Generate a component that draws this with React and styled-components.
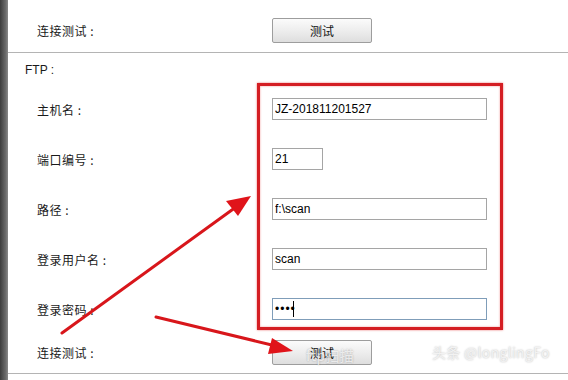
import React from 'react';
import styled, { createGlobalStyle } from 'styled-components';

const GlobalStyle = createGlobalStyle`
  html, body {
    margin: 0;
    padding: 0;
    background: #ffffff;
  }
  body {
    font-family: "Liberation Sans", "Noto Sans CJK SC", sans-serif;
    font-size: 12px;
    color: #111;
  }
`;

const Page = styled.div`
  position: relative;
  display: flex;
  width: 568px;
  height: 380px;
  overflow: hidden;
  background: #fff;
`;

const Edge = styled.div`
  width: 8px;
  flex: none;
  background: linear-gradient(to right, #3c3c3c, #6a6a6a 70%, #8a8a8a);
`;

const Content = styled.div`
  flex: 1;
  display: flex;
  flex-direction: column;
`;

const Row = styled.div`
  display: flex;
  align-items: center;
  height: ${p => p.$h}px;
  padding-left: 29px;
  flex: none;
`;

const Label = styled.div`
  width: 235px;
  flex: none;
  font-family: "Noto Sans CJK SC", sans-serif;
  font-size: 12px;
  letter-spacing: 0.5px;
  color: #1a1a1a;
`;

const Section = styled.div`
  padding: 9px 0 6px 17px;
  line-height: 16px;
  font-size: 12px;
  color: #1a1a1a;
`;

const Divider = styled.div`
  height: 1px;
  background: #b4b4b4;
  flex: none;
`;

const Button = styled.button`
  width: 100px;
  height: 25px;
  border: 1px solid #9d9d9d;
  border-radius: 2px;
  background: linear-gradient(#fbfbfb, #ececec 55%, #dedede);
  font-family: "Noto Sans CJK SC", sans-serif;
  font-size: 12px;
  color: #111;
  padding: 0;
`;

const Field = styled.div`
  position: relative;
  display: flex;
`;

const Input = styled.input`
  box-sizing: border-box;
  width: ${p => p.$w}px;
  height: 22px;
  border: 1px solid ${p => (p.$focus ? '#7f9db9' : '#a5a5a5')};
  padding: 0 2px;
  font-family: "Liberation Sans", Arial, sans-serif;
  font-size: 12px;
  color: #000;
  background: #fff;
  outline: none;
  letter-spacing: ${p => (p.type === 'password' ? '1px' : '0')};
`;

const Caret = styled.span`
  position: absolute;
  left: 21px;
  top: 3px;
  width: 1px;
  height: 16px;
  background: #000;
`;

const Highlight = styled.div`
  position: absolute;
  left: 257px;
  top: 83px;
  width: 240px;
  height: 241px;
  border: 3px solid #d41e23;
  box-shadow: 0 0 2px rgba(230, 60, 60, 0.7), inset 0 0 2px rgba(230, 60, 60, 0.6);
  pointer-events: none;
`;

const Arrows = styled.svg`
  position: absolute;
  left: 0;
  top: 0;
  pointer-events: none;
`;

const Mark = styled.div`
  position: absolute;
  left: ${p => p.$x}px;
  top: ${p => p.$y}px;
  font-family: "Noto Sans CJK SC", sans-serif;
  font-size: 14px;
  color: ${p => p.$c};
  text-shadow: 0 0 2px rgba(0, 0, 0, 0.3);
  letter-spacing: 0.3px;
  pointer-events: none;
`;

const fields = [
  { label: '主机名 :', value: 'JZ-201811201527', w: 215 },
  { label: '端口编号 :', value: '21', w: 51 },
  { label: '路径 :', value: 'f:\\scan', w: 215 },
  { label: '登录用户名 :', value: 'scan', w: 215 },
];

export default function App() {
  return (
    <Page>
      <GlobalStyle />
      <Edge />
      <Content>
        <Row $h={60}>
          <Label>连接测试 :</Label>
          <Button>测试</Button>
        </Row>
        <Divider style={{ marginTop: -8 }} />
        <Section>FTP :</Section>
        {fields.map(f => (
          <Row key={f.label} $h={50}>
            <Label>{f.label}</Label>
            <Input $w={f.w} defaultValue={f.value} readOnly />
          </Row>
        ))}
        <Row $h={50}>
          <Label>登录密码 :</Label>
          <Field>
            <Input $w={215} $focus type="password" defaultValue="scan" readOnly />
            <Caret />
          </Field>
        </Row>
        <Row $h={36}>
          <Label>连接测试 :</Label>
          <Button>测试</Button>
        </Row>
        <Divider style={{ marginTop: 3 }} />
      </Content>

      <Highlight />
      <Arrows width="568" height="380" viewBox="0 0 568 380">
        <g stroke="#d8161b" strokeWidth="3" strokeLinecap="round" fill="#d8161b">
          <line x1="62" y1="333" x2="236" y2="207" />
          <line x1="156" y1="317" x2="276" y2="346" />
        </g>
        <polygon points="251,196 226,201 238,216" fill="#e0141a" />
        <polygon points="293,351 272,338 268,354" fill="#e0141a" />
      </Arrows>
      <Mark $x={306} $y={345} $c="rgba(255,255,255,0.7)">ftp扫描</Mark>
      <Mark $x={432} $y={342} $c="#f2f2f2">头条 @longlingFo</Mark>
    </Page>
  );
}
